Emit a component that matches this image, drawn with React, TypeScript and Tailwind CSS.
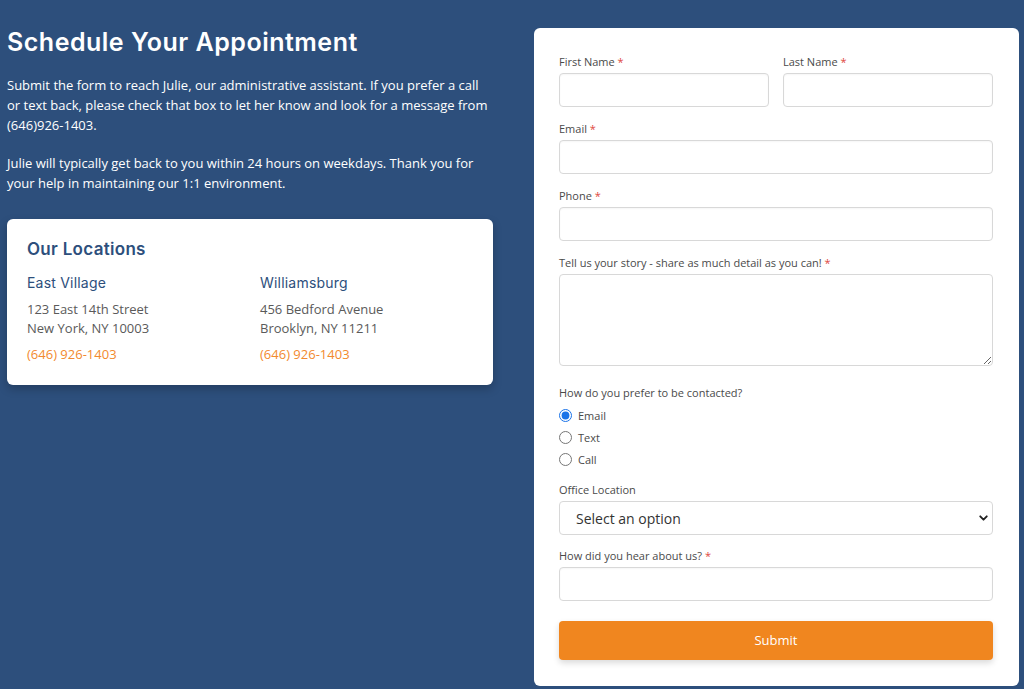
import { ChevronDown } from 'lucide-react'

const body = { fontFamily: '"Open Sans", "Noto Sans", Arial, sans-serif' }
const display = { fontFamily: 'Inter, "Noto Sans", Arial, sans-serif' }

function Label({ text, required }: { text: string; required?: boolean }) {
  return (
    <label className="block text-[11px] leading-[16px] text-[#4a4a4a] mb-[3px]">
      {text}
      {required && <span className="text-[#e0483e]"> *</span>}
    </label>
  )
}

const inputCls =
  'block w-full h-[34px] rounded-[4px] border border-[#d8d8d8] bg-white shadow-[inset_0_1px_2px_rgba(0,0,0,0.04)] outline-none'

const locations = [
  { name: 'East Village', street: '123 East 14th Street', city: 'New York, NY 10003', phone: '(646) 926-1403' },
  { name: 'Williamsburg', street: '456 Bedford Avenue', city: 'Brooklyn, NY 11211', phone: '(646) 926-1403' },
]

export default function App() {
  return (
    <div className="min-h-[689px] bg-[#2d4f7c] flex gap-[41px] pl-[7px] pr-[5px]" style={body}>
      {/* Intro column */}
      <div className="w-[486px] shrink-0 pt-[27px]">
        <h1 className="text-[25px] leading-[30px] font-semibold text-white tracking-[0.5px]" style={display}>
          Schedule Your Appointment
        </h1>
        <p className="mt-[18px] text-[13px] leading-[20px] text-white">
          Submit the form to reach Julie, our administrative assistant. If you prefer a call or text back, please
          check that box to let her know and look for a message from (646)926-1403.
        </p>
        <p className="mt-[18px] text-[13px] leading-[20px] text-white">
          Julie will typically get back to you within 24 hours on weekdays. Thank you for your help in maintaining our
          1:1 environment.
        </p>

        <div className="mt-[26px] bg-white rounded-[6px] px-[20px] pt-[19px] pb-[22px] shadow-[0_4px_10px_rgba(0,0,0,0.22)]">
          <h2 className="text-[17px] leading-[22px] font-semibold text-[#2d4f7c] tracking-[0.3px]" style={display}>
            Our Locations
          </h2>
          <div className="mt-[14px] grid grid-cols-2 gap-x-[20px]">
            {locations.map((l) => (
              <div key={l.name}>
                <div className="text-[14px] leading-[18px] font-normal text-[#2d4f7c] tracking-[0.2px]" style={display}>
                  {l.name}
                </div>
                <div className="mt-[8px] text-[13px] leading-[19px] text-[#5a5a5a]">
                  {l.street}
                  <br />
                  {l.city}
                </div>
                <div className="mt-[7px] text-[13px] leading-[18px] text-[#f28a2e]">{l.phone}</div>
              </div>
            ))}
          </div>
        </div>
      </div>

      {/* Form card */}
      <div className="flex-1 mt-[28px] mb-[3px] bg-white rounded-[6px] pl-[25px] pr-[26px] pt-[26px] pb-[26px]">
        <form className="flex flex-col">
          <div className="grid grid-cols-2 gap-x-[14px]">
            <div>
              <Label text="First Name" required />
              <input className={inputCls} />
            </div>
            <div>
              <Label text="Last Name" required />
              <input className={inputCls} />
            </div>
          </div>

          <div className="mt-[14px]">
            <Label text="Email" required />
            <input className={inputCls} />
          </div>

          <div className="mt-[14px]">
            <Label text="Phone" required />
            <input className={inputCls} />
          </div>

          <div className="mt-[14px]">
            <Label text="Tell us your story - share as much detail as you can!" required />
            <textarea className="block w-full h-[92px] rounded-[4px] border border-[#d8d8d8] bg-white outline-none resize-y" />
          </div>

          <div className="mt-[19px]">
            <Label text="How do you prefer to be contacted?" />
            <div className="mt-[8px] flex flex-col gap-[9px]">
              {['Email', 'Text', 'Call'].map((o, i) => (
                <label key={o} className="flex items-center gap-[6px] text-[11px] leading-[13px] text-[#4a4a4a]">
                  <input
                    type="radio"
                    name="contact"
                    defaultChecked={i === 0}
                    className="m-0 w-[13px] h-[13px] accent-[#1a73e8]"
                  />
                  {o}
                </label>
              ))}
            </div>
          </div>

          <div className="mt-[16px]">
            <Label text="Office Location" />
            <div className="relative">
              <select className="block w-full h-[34px] appearance-none rounded-[4px] border border-[#d8d8d8] bg-white pl-[16px] text-[14px] text-[#333] outline-none">
                <option>Select an option</option>
                <option>East Village</option>
                <option>Williamsburg</option>
              </select>
              <ChevronDown
                className="absolute right-[3px] top-1/2 -translate-y-1/2 w-[13px] h-[13px] text-[#222] pointer-events-none"
                strokeWidth={3.5}
              />
            </div>
          </div>

          <div className="mt-[13px]">
            <Label text="How did you hear about us?" required />
            <input className={inputCls} />
          </div>

          <button
            type="button"
            className="mt-[20px] h-[39px] w-full rounded-[4px] bg-[#f0861f] text-white text-[13px] shadow-[0_3px_6px_rgba(0,0,0,0.15)]"
          >
            Submit
          </button>
        </form>
      </div>
    </div>
  )
}
